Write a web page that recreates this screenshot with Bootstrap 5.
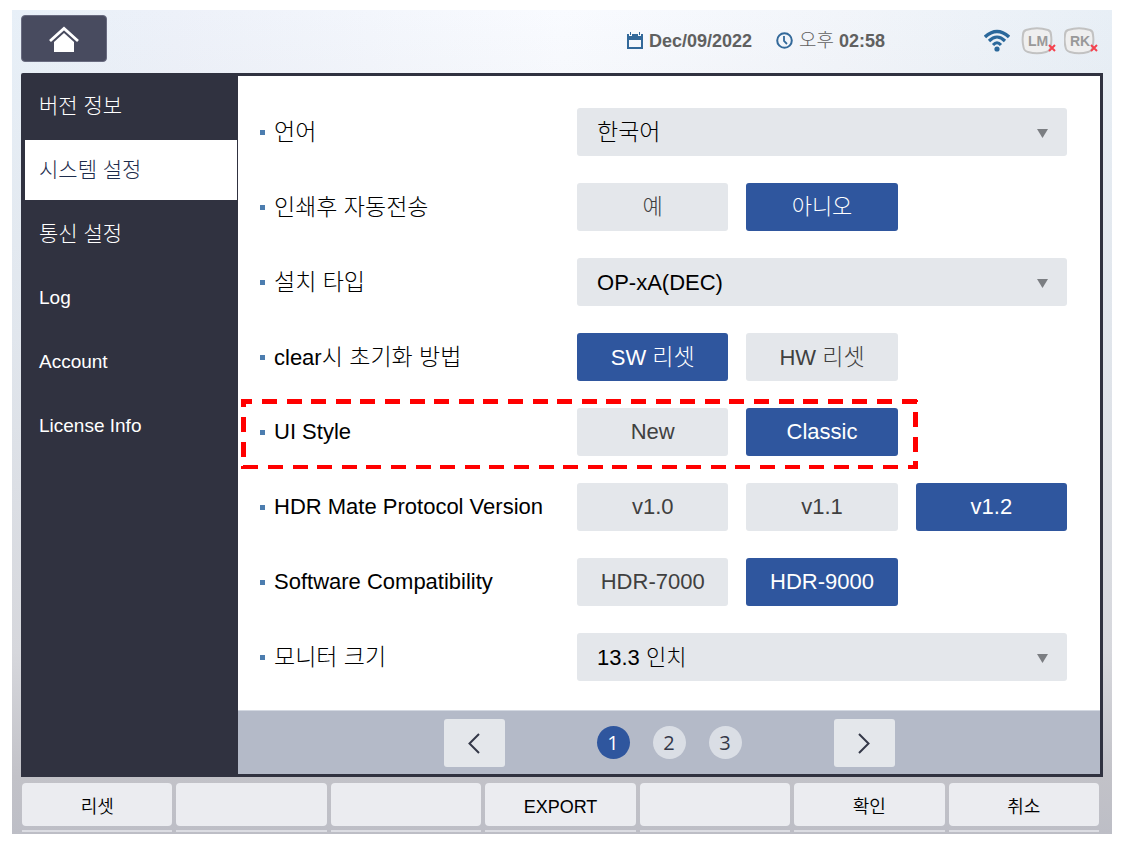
<!DOCTYPE html>
<html lang="ko">
<head>
<meta charset="utf-8">
<meta name="viewport" content="width=device-width, initial-scale=1">
<title>시스템 설정</title>
<link href="https://cdn.jsdelivr.net/npm/bootstrap@5.3.0/dist/css/bootstrap.min.css" rel="stylesheet">
<style>
:root { --navy:#303240; --blue:#2f569e; --soft:#e4e7eb; }
body { background:#fff; color:#000; font-family:"Liberation Sans","Noto Sans CJK KR",sans-serif; font-weight:300; padding:10px 18px 9px 12px; }
.device { min-height:calc(100vh - 19px); padding:0 9px; background:
  linear-gradient(180deg, rgba(214,215,220,0) 0%, rgba(214,215,220,.4) 40%, #d6d7dc 78%, #c2c2c8 93%, #bdbec6 100%),
  linear-gradient(90deg, #e8f0f8 0%, #edf1f9 15%, #f9fbff 50%, #f2f5fa 75%, #e8eff6 100%); }
.topbar { height:63px; padding:5px 5px 11px 0; }
.home-btn { width:86px; height:47px; background:#484b5f; border:1px solid #696b80; border-radius:4px; }
.stamp { font-size:18px; line-height:24px; font-weight:700; color:#606060; gap:6px; }
.stamp .hangul { font-size:19px; font-weight:300; }
.status { margin-left:99px; }
.panel { border:3px solid var(--navy); border-radius:2px 0 0 0; background:#fff; }
.side { width:214px; background:var(--navy); padding:0 1px; gap:4px; }
.side a { display:flex; align-items:center; height:60px; padding-left:14px; color:#fff; text-decoration:none; font-size:19px; }
.side a:lang(ko) { font-size:21px; }
.side a.active { background:#fff; color:#1d2c4c; }
.settings { padding:32px 33px 29px 22px; gap:27px; }
.setting { display:grid; grid-template-columns:11fr 17fr; align-items:center; min-height:48px; position:relative; }
.name-cell { font-size:22px; line-height:28px; display:flex; align-items:center; gap:9px; white-space:nowrap; }
.name-cell::before { content:""; width:5px; height:5px; background:#4c7daf; }
.hangul { font-size:23px; }
.choices { display:grid; grid-template-columns:repeat(3,minmax(0,1fr)); gap:18px; }
.opt { height:48px; padding:0; border:0; border-radius:3px; background:var(--soft); color:#404040; font-size:22px; line-height:28px; font-weight:300; white-space:nowrap; }
.opt.active, .opt:hover { background:var(--blue) !important; color:#fff !important; }
.picker { position:relative; }
.picker select { appearance:none; width:100%; height:48px; border:0; border-radius:3px; background:var(--soft); color:#000; font-family:inherit; font-weight:300; font-size:22px; padding:0 40px 0 20px; }
.picker select.hangul { font-size:23px; }
.picker svg { position:absolute; right:19px; top:21px; pointer-events:none; }
.mark-frame { position:absolute; left:-19px; top:-9px; width:84%; height:71px; pointer-events:none; overflow:visible; }
.pager { height:64px; background:#b4bac8; border-top:1px solid #d3d8e1; gap:92px; }
.dots { gap:23px; }
.step-btn { width:61px; height:48px; padding:0; border:0; border-radius:3px; background:var(--soft); }
.page-dot { width:33px; height:33px; padding:0; border:0; border-radius:50%; background:#dadee5; color:#343848; font-family:"Open Sans",sans-serif; font-size:20px; line-height:33px; font-weight:400; }
.page-dot.active { background:var(--blue); color:#fff; }
.keys { display:grid; grid-template-columns:repeat(7,minmax(0,1fr)); gap:4px; padding:6px 4px 2px 1px; }
.key { height:43px; padding:4px 0 0; border:0; border-radius:4px; background:#ebecf0; color:#000; font-size:18px; line-height:24px; font-weight:350; }
.keys hr { height:2px; margin:0; border:0; background:#dcdde3; opacity:1; }
</style>
</head>
<body>
<div class="device d-flex flex-column">
  <header class="topbar d-flex align-items-center">
    <button type="button" class="btn home-btn p-0 me-auto d-flex align-items-center justify-content-center" aria-label="Home">
      <svg width="30" height="26" viewBox="0 0 30 26"><path d="M1 15 15 2.500 29 15" fill="none" stroke="#fff" stroke-width="2.800"/><path d="M15 7 25 16V26H5V16Z" fill="#fff"/></svg>
    </button>
    <div class="stamp d-flex align-items-center pt-1">
      <svg width="16" height="17" viewBox="0 0 16 17"><path fill="#33699a" fill-rule="evenodd" d="M0 2h2v2h3V2h6v2h3V2h2v15H0ZM2 8v7h12V8Z"/><path fill="#33699a" d="M3 0h1v3H3ZM12 0h1v3h-1Z"/></svg>
      <span>Dec/09/2022</span>
    </div>
    <div class="stamp d-flex align-items-center ms-4 pt-1">
      <svg width="17" height="17" viewBox="0 0 17 17" fill="none" stroke="#33699a"><circle cx="8.500" cy="8.500" r="7.300" stroke-width="2"/><path d="M8 4v5l3 3" stroke-width="1.800"/></svg>
      <span><span class="hangul">오후</span> 02:58</span>
    </div>
    <div class="status d-flex align-items-center pt-1">
      <svg width="26" height="23" viewBox="0 0 26 23" fill="none" stroke="#2a689b"><path d="M1 8Q13-3 25 8" stroke-width="3.400"/><path d="M5 12Q13 4 21 12" stroke-width="3.200"/><path d="M9 16Q13 11.500 17 16" stroke-width="3"/><circle cx="13" cy="20" r="2.600" fill="#2a689b" stroke="none"/></svg>
      <svg class="ms-2 me-2" width="38" height="28" viewBox="-4 0 38 28"><path d="M4 3Q15-.5 26 3Q29 4 29 8Q30 14 28.500 20Q28 24 24 25Q15 27.500 6 25Q2 24 1.500 20Q0 14 1 8Q1 4 4 3Z" fill="#efefef" stroke="#c2c2c2" stroke-width="2"/><text x="16" y="19" text-anchor="middle" font-size="14" font-weight="700" fill="#999">LM</text><path d="M27 18l6 6M33 18l-6 6" stroke="#f5424e" stroke-width="2"/></svg>
      <svg width="34" height="28" viewBox="0 0 34 28"><path d="M4 3Q15-.5 26 3Q29 4 29 8Q30 14 28.500 20Q28 24 24 25Q15 27.500 6 25Q2 24 1.500 20Q0 14 1 8Q1 4 4 3Z" fill="#efefef" stroke="#c2c2c2" stroke-width="2"/><text x="16" y="19" text-anchor="middle" font-size="14" font-weight="700" fill="#999">RK</text><path d="M27 18l6 6M33 18l-6 6" stroke="#f5424e" stroke-width="2"/></svg>
    </div>
  </header>

  <main class="panel d-flex flex-grow-1">
    <nav class="side d-flex flex-column flex-shrink-0">
      <a href="#">버전 정보</a>
      <a href="#" class="active" aria-current="page">시스템 설정</a>
      <a href="#">통신 설정</a>
      <a href="#" lang="en">Log</a>
      <a href="#" lang="en">Account</a>
      <a href="#" lang="en">License Info</a>
    </nav>
    <section class="d-flex flex-column flex-grow-1">
      <div class="settings d-flex flex-column flex-grow-1">
        <div class="setting">
          <label class="name-cell hangul" for="language">언어</label>
          <div class="picker"><select id="language" class="hangul"><option>한국어</option></select><svg width="11" height="9"><path d="M0 0h11L5.500 9Z" fill="#7b7e82"/></svg></div>
        </div>
        <div class="setting">
          <span class="name-cell hangul" id="n-auto">인쇄후 자동전송</span>
          <div class="choices" role="group" aria-labelledby="n-auto"><button type="button" class="btn opt hangul">예</button><button type="button" class="btn opt hangul active">아니오</button></div>
        </div>
        <div class="setting">
          <label class="name-cell hangul" for="install">설치 타입</label>
          <div class="picker"><select id="install"><option>OP-xA(DEC)</option></select><svg width="11" height="9"><path d="M0 0h11L5.500 9Z" fill="#7b7e82"/></svg></div>
        </div>
        <div class="setting">
          <span class="name-cell" id="n-clear"><span>clear<span class="hangul">시 초기화 방법</span></span></span>
          <div class="choices" role="group" aria-labelledby="n-clear"><button type="button" class="btn opt active">SW <span class="hangul">리셋</span></button><button type="button" class="btn opt">HW <span class="hangul">리셋</span></button></div>
        </div>
        <div class="setting">
          <span class="name-cell" id="n-ui">UI Style</span>
          <div class="choices" role="group" aria-labelledby="n-ui"><button type="button" class="btn opt">New</button><button type="button" class="btn opt active">Classic</button></div>
          <svg class="mark-frame" aria-hidden="true" stroke="#f00" stroke-dasharray="15 9.600" shape-rendering="crispEdges">
            <line x1="0" y1="2.500" x2="99.700%" y2="2.500" stroke-width="5" stroke-dashoffset="3.600"/>
            <line x1="0" y1="68" x2="99.700%" y2="68" stroke-width="4" stroke-dashoffset="22.200"/>
            <line x1="2.500" y1="1" x2="2.500" y2="70" stroke-width="5" stroke-dashoffset="7.600"/>
            <line x1="99.450%" y1="1" x2="99.450%" y2="70" stroke-width="5" stroke-dashoffset="12.600"/>
          </svg>
        </div>
        <div class="setting">
          <span class="name-cell" id="n-hdr">HDR Mate Protocol Version</span>
          <div class="choices" role="group" aria-labelledby="n-hdr"><button type="button" class="btn opt">v1.0</button><button type="button" class="btn opt">v1.1</button><button type="button" class="btn opt active">v1.2</button></div>
        </div>
        <div class="setting">
          <span class="name-cell" id="n-soft">Software Compatibility</span>
          <div class="choices" role="group" aria-labelledby="n-soft"><button type="button" class="btn opt">HDR-7000</button><button type="button" class="btn opt active">HDR-9000</button></div>
        </div>
        <div class="setting">
          <label class="name-cell hangul" for="monitor">모니터 크기</label>
          <div class="picker"><select id="monitor"><option>13.3 인치</option></select><svg width="11" height="9"><path d="M0 0h11L5.500 9Z" fill="#7b7e82"/></svg></div>
        </div>
      </div>
      <div class="pager d-flex align-items-center justify-content-center">
        <button type="button" class="btn step-btn" aria-label="Previous page"><svg width="12" height="21" viewBox="0 0 12 21"><path d="M11 1 1.500 10.500 11 20" fill="none" stroke="#343848" stroke-width="2"/></svg></button>
        <div class="dots d-flex">
          <button type="button" class="btn page-dot active">1</button>
          <button type="button" class="btn page-dot">2</button>
          <button type="button" class="btn page-dot">3</button>
        </div>
        <button type="button" class="btn step-btn" aria-label="Next page"><svg width="12" height="21" viewBox="0 0 12 21"><path d="M1 1 10.500 10.500 1 20" fill="none" stroke="#343848" stroke-width="2"/></svg></button>
      </div>
    </section>
  </main>

  <footer class="keys">
    <button type="button" class="btn key">리셋</button>
    <button type="button" class="btn key" aria-label="F2"></button>
    <button type="button" class="btn key" aria-label="F3"></button>
    <button type="button" class="btn key" lang="en">EXPORT</button>
    <button type="button" class="btn key" aria-label="F5"></button>
    <button type="button" class="btn key">확인</button>
    <button type="button" class="btn key">취소</button>
    <hr><hr><hr><hr><hr><hr><hr>
  </footer>
</div>
<script src="https://cdn.jsdelivr.net/npm/bootstrap@5.3.0/dist/js/bootstrap.bundle.min.js"></script>
</body>
</html>
